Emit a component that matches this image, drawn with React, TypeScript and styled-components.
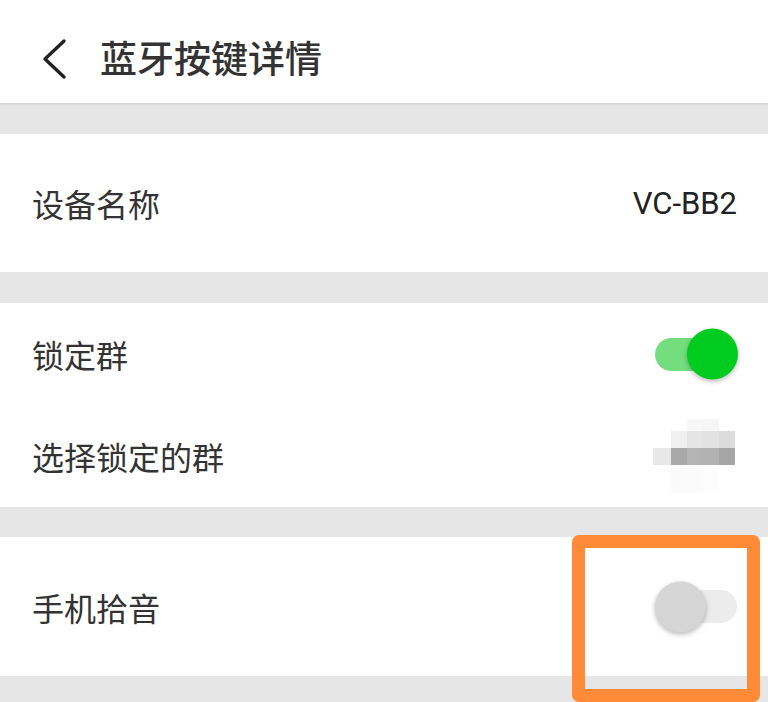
import React from "react";
import styled, { createGlobalStyle } from "styled-components";

const Global = createGlobalStyle`
  html, body { margin: 0; padding: 0; background: #e6e6e6; }
  body { font-family: "Noto Sans CJK SC", "Noto Sans", sans-serif; color: #333; }
`;

const Page = styled.div`
  width: 768px;
  height: 702px;
  background: #e6e6e6;
  position: relative;
  overflow: hidden;
`;

const Header = styled.header`
  height: 104px;
  box-sizing: border-box;
  background: #fff;
  display: flex;
  align-items: center;
  padding: 14px 0 0 40px;
  gap: 32px;
  border-bottom: 1px solid #d6d6d6;
  box-shadow: 0 1px 2px rgba(0,0,0,0.06);
`;

const Title = styled.h1`
  margin: 0;
  font-size: 37px;
  font-weight: 500;
  color: #333;
  line-height: 1;
  padding-bottom: 2px;
`;

const Section = styled.section<{ $top: number; $h: number }>`
  margin-top: ${(p) => p.$top}px;
  height: ${(p) => p.$h}px;
  background: #fff;
  display: flex;
  flex-direction: column;
  justify-content: center;
`;

const Row = styled.div<{ $h: number }>`
  height: ${(p) => p.$h}px;
  display: flex;
  align-items: center;
  justify-content: space-between;
  padding: 0 31px 0 32px;
`;

const Label = styled.span`
  font-size: 32px;
  color: #333;
  line-height: 1;
`;

const Value = styled.span`
  font-family: "Roboto", "Liberation Sans", sans-serif;
  font-size: 31px;
  color: #222;
  line-height: 1;
`;

const Track = styled.div<{ $on: boolean }>`
  width: ${(p) => (p.$on ? 70 : 60)}px;
  height: 33px;
  border-radius: 17px;
  background: ${(p) => (p.$on ? "#74de7e" : "#ececec")};
  position: relative;
  margin-right: ${(p) => (p.$on ? 12 : 0)}px;
`;

const Knob = styled.div<{ $on: boolean }>`
  position: absolute;
  top: 50%;
  width: 51px;
  height: 51px;
  border-radius: 50%;
  transform: translateY(-50%);
  ${(p) => (p.$on ? "right: -13px;" : "left: -22px;")}
  background: ${(p) => (p.$on ? "#00cc1f" : "#d5d5d5")};
  box-shadow: 0 2px 5px rgba(0, 0, 0, 0.28);
`;

const Blur = styled.div`
  width: 86px;
  height: 74px;
  margin-right: -2px;
  display: grid;
  grid-template-columns: 18px 16px 16px 16px 16px;
  grid-template-rows: 12px 17px 17px 28px;
  filter: blur(0.6px);
`;

const Cell = styled.div<{ $c: string }>`
  background: ${(p) => p.$c};
`;

const Highlight = styled.div`
  position: absolute;
  left: 572px;
  top: 535px;
  width: 188px;
  height: 167px;
  box-sizing: border-box;
  border: 13px solid #ff8a38;
  border-radius: 7px;
`;

function Toggle({ on }: { on: boolean }) {
  return (
    <Track $on={on}>
      <Knob $on={on} />
    </Track>
  );
}

const blurCells = [
  "#fff", "#fff", "#f8f8f8", "#f6f6f6", "#fff",
  "#fff", "#f0f0f0", "#e4e4e4", "#e2e2e2", "#dcdcdc",
  "#e8e8e8", "#a9a9a9", "#b4b4b4", "#b2b2b2", "#a5a5a5",
  "#fff", "#fafafa", "#fbfbfb", "#fdfdfd", "#fff",
];

export default function App() {
  return (
    <Page>
      <Global />
      <Header>
        <svg width="28" height="42" viewBox="0 0 28 42">
          <polyline points="24,3 5,21 24,39" fill="none" stroke="#222" strokeWidth="3.4" strokeLinecap="round" strokeLinejoin="round" />
        </svg>
        <Title>蓝牙按键详情</Title>
      </Header>
      <Section $top={30} $h={138}>
        <Row $h={138}>
          <Label>设备名称</Label>
          <Value>VC-BB2</Value>
        </Row>
      </Section>
      <Section $top={31} $h={204}>
        <Row $h={102}>
          <Label>锁定群</Label>
          <Toggle on />
        </Row>
        <Row $h={102}>
          <Label>选择锁定的群</Label>
          <Blur>
            {blurCells.map((c, i) => (
              <Cell key={i} $c={c} />
            ))}
          </Blur>
        </Row>
      </Section>
      <Section $top={30} $h={139}>
        <Row $h={139}>
          <Label>手机拾音</Label>
          <Toggle on={false} />
        </Row>
      </Section>
      <Highlight />
    </Page>
  );
}
